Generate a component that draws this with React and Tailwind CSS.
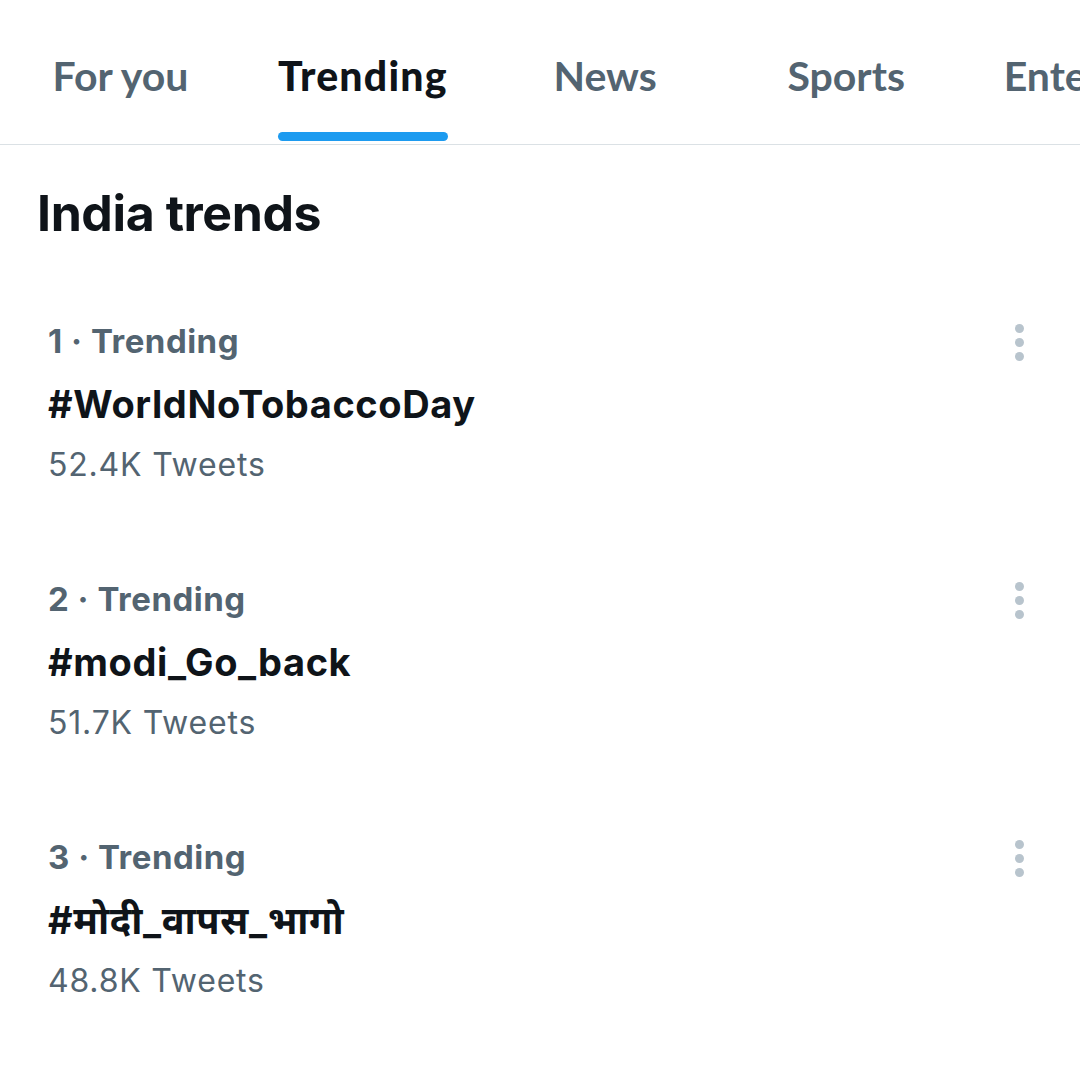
import React from "react";

const tabs = ["For you", "Trending", "News", "Sports", "Entertainment"];

const trends = [
  { rank: 1, tag: "#WorldNoTobaccoDay", count: "52.4K Tweets" },
  { rank: 2, tag: "#modi_Go_back", count: "51.7K Tweets" },
  { rank: 3, tag: "#मोदी_वापस_भागो", count: "48.8K Tweets" },
];

function MoreDots() {
  return (
    <div className="flex flex-col items-center gap-[5px] pt-[5px]">
      <span className="w-[9px] h-[9px] rounded-full bg-[#b8c4cd]" />
      <span className="w-[9px] h-[9px] rounded-full bg-[#b8c4cd]" />
      <span className="w-[9px] h-[9px] rounded-full bg-[#b8c4cd]" />
    </div>
  );
}

export default function App() {
  return (
    <div
      className="w-[1080px] h-[1081px] bg-white overflow-hidden"
      style={{ fontFamily: 'Inter, "Noto Sans", sans-serif' }}
    >
      {/* tab bar */}
      <div
        className="flex h-[145px] border-b border-[#dbe1e5] whitespace-nowrap overflow-hidden"
        style={{ fontFamily: 'Lato, "Noto Sans", sans-serif' }}
      >
        {tabs.map((t) => (
          <div key={t} className="min-w-[241px] px-[37px] shrink-0 flex justify-center">
            <div className="relative">
              <span
                className={
                  "block mt-[49px] leading-[54px] text-[41px] " +
                  (t === "Trending"
                    ? "font-black text-[#0f1419] tracking-[1.2px]"
                    : "font-bold text-[#536471]")
                }
              >
                {t}
              </span>
              {t === "Trending" && (
                <span className="absolute left-0 right-0 top-[132px] h-[9px] rounded-full bg-[#1d9bf0]" />
              )}
            </div>
          </div>
        ))}
      </div>

      <h2 className="px-[37px] pt-[40px] text-[50px] leading-[56px] font-bold text-[#0f1419] tracking-[-0.4px]">
        India trends
      </h2>

      <div className="mt-[78px]">
        {trends.map((t) => (
          <div key={t.rank} className="flex justify-between pl-[48px] pr-[56px] h-[258px]">
            <div className="flex flex-col">
              <div className="text-[33px] leading-[44px] font-bold text-[#536471] tracking-[0.5px]">
                {t.rank} · Trending
              </div>
              <div className="mt-[17px] text-[38px] leading-[48px] font-bold text-[#0f1419] tracking-[0.6px]">
                {t.tag}
              </div>
              <div className="mt-[15px] text-[32px] leading-[44px] text-[#536471] tracking-[0.8px]">
                {t.count}
              </div>
            </div>
            <MoreDots />
          </div>
        ))}
      </div>
    </div>
  );
}
